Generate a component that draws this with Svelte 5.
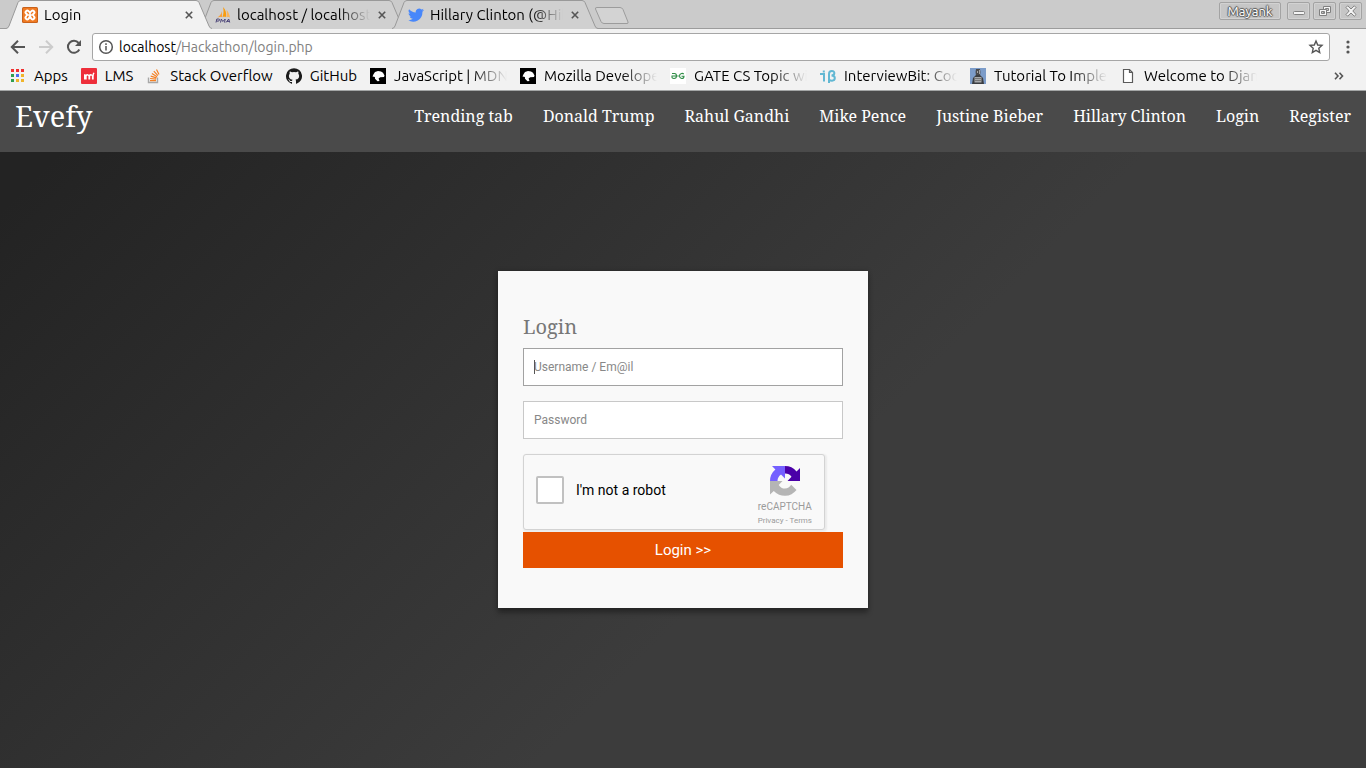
<script>
  const tabs = [
    { icon: 'xampp', label: 'Login', active: true },
    { icon: 'pma', label: 'localhost / localhost' },
    { icon: 'twitter', label: 'Hillary Clinton (@Hil' }
  ];
  const bookmarks = [
    { icon: 'apps', label: 'Apps' },
    { icon: 'lms', label: 'LMS' },
    { icon: 'stack', label: 'Stack Overflow' },
    { icon: 'github', label: 'GitHub' },
    { icon: 'mdn', label: 'JavaScript | MDN', long: true },
    { icon: 'mdn', label: 'Mozilla Develope', long: true },
    { icon: 'gfg', label: 'GATE CS Topic wi', long: true },
    { icon: 'ib', label: 'InterviewBit: Cod', long: true },
    { icon: 'tut', label: 'Tutorial To Imple', long: true },
    { icon: 'page', label: 'Welcome to Djan', long: true }
  ];
  const links = ['Trending tab', 'Donald Trump', 'Rahul Gandhi', 'Mike Pence', 'Justine Bieber', 'Hillary Clinton', 'Login', 'Register'];
  const dots = ['#f03030', '#f03030', '#f03030', '#2f9e4f', '#4a6cf0', '#f0b429', '#2f9e4f', '#f0b429', '#f0b429'];

  let username = $state('');
  let password = $state('');
  let human = $state(false);
</script>

{#snippet icon(name)}
  <svg class="icon" viewBox="0 0 16 16" aria-hidden="true">
    {#if name === 'xampp'}
      <rect width="16" height="16" rx="1.5" fill="#c9611a" />
      <rect x="1" y="1" width="14" height="14" rx="1" fill="#f07a22" />
      <path d="M5.300 5.300l5.400 5.400M10.700 5.300l-5.400 5.400" stroke="#fff" stroke-width="5.400" stroke-linecap="round" />
      <path d="M5.300 5.400Q8 6.500 5.300 10.600M10.700 5.400Q8 6.500 10.700 10.600" fill="none" stroke="#f07a22" stroke-width="1.500" stroke-linecap="round" />
      <path d="M4 8h8" stroke="#fff" stroke-width="1.500" />
    {:else if name === 'pma'}
      <path d="M7 1.500C7.500 5 6 8 2.500 10.500c2-.5 3-.6 4.500-.5z" fill="#f9a13a" />
      <path d="M8 0c3 3 3.500 6.500 3 10-1-.4-2-.4-3.500 0C8.500 7 9 4 8 0z" fill="#f89c0e" />
      <path d="M11.500 3c2 2 3 4.500 3.500 7.500-1-.5-2-.6-3.500-.5.400-2.500.5-4.500 0-7z" fill="#fbb55a" />
      <path d="M1 15.500l.8-3.500h1.700q1.300 0 1 1.100t-1.500 1H1.700M5.500 15.500l.8-3.500 1.500 2.500L10.200 12l-.7 3.500M11 15.500l2.700-3.500 1 3.500M12 14.400h2.400" fill="none" stroke="#4b4478" stroke-width="1" />
    {:else if name === 'twitter'}
      <path d="M16 3.100c-.6.3-1.200.4-1.900.5.700-.4 1.200-1 1.400-1.800-.6.400-1.300.6-2.100.8a3.280 3.280 0 0 0-5.600 3C5.100 5.500 2.700 4.100 1.100 2.200a3.300 3.300 0 0 0 1 4.400c-.5 0-1-.2-1.500-.4 0 1.600 1.100 2.900 2.600 3.200-.5.100-1 .2-1.500.1.400 1.300 1.600 2.200 3.100 2.300A6.600 6.600 0 0 1 0 13.100a9.300 9.300 0 0 0 14.400-8.300c.6-.5 1.200-1 1.600-1.700z" fill="#4887fa" />
    {:else if name === 'apps'}
      {#each dots as color, i}
        <rect x={1 + (i % 3) * 5} y={1 + Math.floor(i / 3) * 5} width="3" height="3" fill={color} />
      {/each}
    {:else if name === 'lms'}
      <rect width="16" height="16" rx="1" fill="#ee2e3a" />
      <path d="M3 11.500V6.200h1.700v.7Q6 5.400 7.900 6.800 10 5.300 11.300 6.900q.3-1.300 1-2.400l1.300.6q-.9 1.300-.9 3.400v3h-1.800V8.200q-.7-1.200-1.700 0v3.300H7.400V8.200q-.8-1.200-1.700 0v3.300z" fill="#fff" />
    {:else if name === 'stack'}
      <path d="M2.500 9.500v5h9v-5" fill="none" stroke="#a8a8a8" stroke-width="1.400" />
      <path d="M4 12.600h6M4.100 10.500l6 .6M4.700 8.200l5.800 1.600M5.900 5.600l5.200 3.100M7.800 3.200l4.100 4.400M10.500 1.500l2.500 5" fill="none" stroke="#f48024" stroke-width="1.200" />
    {:else if name === 'github'}
      <path d="M8 .2a8 8 0 0 0-2.530 15.590c.4.070.550-.170.550-.380v-1.490c-2.230.480-2.690-.950-2.690-.950-.360-.920-.890-1.170-.890-1.170-.730-.5.050-.490.050-.490.8.060 1.230.830 1.230.830.720 1.220 1.870.870 2.330.660.070-.520.280-.870.510-1.070-1.780-.2-3.640-.890-3.640-3.950 0-.870.310-1.590.820-2.150-.080-.2-.360-1.020.080-2.120 0 0 .670-.220 2.200.820a7.700 7.700 0 0 1 4 0c1.530-1.040 2.200-.820 2.200-.820.440 1.100.160 1.920.080 2.120.510.560.820 1.270.820 2.150 0 3.070-1.870 3.750-3.650 3.950.290.250.540.730.540 1.480v2.200c0 .210.150.460.550.380A8 8 0 0 0 8 .2z" fill="#1b1b1b" />
    {:else if name === 'mdn'}
      <rect width="16" height="16" fill="#000" />
      <path d="M2.500 8.500l1-2.300L5 4l3-1 3 .4 2 1.400 1.500 2.700L14 9l-3.800.2-1.600 1.200.9 2.600-2 .2L5 10.800 4.900 9z" fill="#fff" />
    {:else if name === 'gfg'}
      <rect width="16" height="16" fill="#fff" />
      <path d="M2 5.500h2.500q2 0 2 2.500t-2.500 2.500Q1.500 10.500 2 8h4.500M13.800 6q-1-.8-2.300-.5Q9.500 6 9.500 8t2.200 2.500q2.300 0 2.300-2.300h-2.500M7.200 8h1.600" fill="none" stroke="#2f8d46" stroke-width="1.100" />
    {:else if name === 'ib'}
      <path d="M0 6h4v7.500M2.800 3.500h2M9 15V6q0-3 2.800-3t2.500 2.500Q14 7.500 11.500 7.500q3.300 0 3.300 2.500T12 12.700q-1.700 0-2.800-.8" fill="none" stroke="#62b8d3" stroke-width="2" />
    {:else if name === 'tut'}
      <rect width="16" height="16" fill="#7c9cc9" />
      <path d="M6 1h4q1 3 0 7H6Q5 4 6 1z" fill="#4a4a4c" /><path d="M7 3h1v2H7zM9 2h1v4H9z" fill="#a5a5a5" />
      <path d="M2 16l1-6 3-3h4l3 3 1 6z" fill="#3b3d40" /><path d="M4.500 9h7v5.500h-7z" fill="#a6a8aa" />
      <path d="M5 10.500h6M5 12.500h6" stroke="#777" />
    {:else if name === 'page'}
      <path d="M3.500 1.500h6l3 3v10h-9zM9.500 1.500v3h3" fill="#fff" stroke="#5a5a5a" stroke-width="1.200" />
    {/if}
  </svg>
{/snippet}

<div class="window">
  <header class="chrome">
    <div class="strip">
      <div class="tabs">
        {#each tabs as tab}
          <div class="tab" class:active={tab.active}>
            <svg class="shape" viewBox="0 0 206 29" preserveAspectRatio="none" aria-hidden="true">
              <path d="M0 28.500Q2 28.500 3 26L12 2.500Q13 .5 15 .5H190Q192 .5 193 2.500L203 26Q204 28.500 206 28.500V29H0z" class="fill" />
              <path d="M0 28.500Q2 28.500 3 26L12 2.500Q13 .5 15 .5H190Q192 .5 193 2.500L203 26Q204 28.500 206 28.500" class="edge" />
            </svg>
            {@render icon(tab.icon)}
            <span class="title">{tab.label}</span>
            <button class="close" aria-label="Close tab">
              <svg viewBox="0 0 10 10"><path d="M1 1l8 8M9 1l-8 8" /></svg>
            </button>
          </div>
        {/each}
        <button class="new" aria-label="New tab">
          <svg viewBox="0 0 36 18"><path d="M3 .5H26q2 0 3 2L34 15q.5 1.500-1 1.500H10q-2 0-3-2L1.500 2Q1 .5 3 .5z" fill="#d3d3d3" stroke="#9c9c9c" /></svg>
        </button>
      </div>
      <div class="controls">
        <button class="user">Mayank</button>
        <button aria-label="Minimize"><svg viewBox="0 0 16 12"><rect x="2.500" y="6.500" width="11" height="3" rx="1" /></svg></button>
        <button aria-label="Restore"><svg viewBox="0 0 16 12"><path d="M6.500 1.500h7v6h-7zM8.500 3.500v2h3v-2z" fill-rule="evenodd" /><path d="M2.500 4.500h7v6h-7zM4.500 6.500v2h3v-2z" fill-rule="evenodd" /></svg></button>
        <button aria-label="Close"><svg viewBox="0 0 16 12"><path d="M3 2.500 4.700.8 8 4l3.300-3.200L13 2.500 9.800 6 13 9.500l-1.700 1.700L8 8l-3.300 3.200L3 9.500 6.200 6z" /></svg></button>
      </div>
    </div>

    <div class="toolbar">
      <button class="tool" aria-label="Back"><svg viewBox="0 0 16 16"><path d="M15 8H2M8 1.800 1.800 8 8 14.200" /></svg></button>
      <button class="tool dim" aria-label="Forward"><svg viewBox="0 0 16 16"><path d="M1 8h13M8 1.800 14.200 8 8 14.200" /></svg></button>
      <button class="tool" aria-label="Reload"><svg viewBox="0 0 16 16"><path d="M13.300 10.500A6 6 0 1 1 12.600 4" /><path d="M15 1v6H9z" class="solid" /></svg></button>
      <div class="omnibox">
        <svg class="info" viewBox="0 0 16 16" aria-hidden="true"><circle cx="8" cy="8" r="6.300" /><path d="M8 7v4.500M8 4.300v1.600" /></svg>
        <span class="url">localhost<i>/Hackathon/login.php</i></span>
        <button class="tool" aria-label="Bookmark this page"><svg class="star" viewBox="0 0 16 16"><path d="M8 2l1.700 4 4.300.4-3.200 2.900.9 4.200L8 11.300l-3.700 2.200.9-4.200L2 6.400 6.300 6z" /></svg></button>
      </div>
      <button class="tool menu" aria-label="Menu"><svg viewBox="0 0 16 16"><circle cx="8" cy="3" r="1.600" /><circle cx="8" cy="8" r="1.600" /><circle cx="8" cy="13" r="1.600" /></svg></button>
    </div>

    <nav class="bookmarks" aria-label="Bookmarks">
      {#each bookmarks as mark}
        <a href="#top" class:long={mark.long}>{@render icon(mark.icon)}<span>{mark.label}</span></a>
      {/each}
      <button class="more" aria-label="More bookmarks"><svg viewBox="0 0 10 8"><path d="M1 .8 4 4 1 7.200M5.500.8l3 3.200-3 3.200" /></svg></button>
    </nav>
  </header>

  <nav class="site" id="top">
    <a class="brand" href="#top">Evefy</a>
    <div class="links">
      {#each links as link}<a href="#top">{link}</a>{/each}
    </div>
  </nav>

  <main>
    <form class="card" onsubmit={(e) => e.preventDefault()}>
      <h1>Login</h1>
      <div class="field">
        <input class="text current" type="text" aria-label="Username or email" placeholder="Username / Em@il" bind:value={username} />
        {#if !username}<span class="caret"></span>{/if}
      </div>
      <input class="text" type="password" aria-label="Password" placeholder="Password" bind:value={password} />
      <div class="captcha">
        <label><input type="checkbox" bind:checked={human} />I'm not a robot</label>
        <div class="badge">
          <svg viewBox="0 0 32 32" aria-hidden="true">
            <path d="M16 1a15 15 0 0 1 11.500 5.400L31 3v13H18.500l4-4.200A7.600 7.600 0 0 0 16 8.500z" fill="#4a00a8" />
            <path d="M16 1v12.500l-4-4Q8.500 12 8.500 16H1A15 15 0 0 1 6.400 4.500L3 1z" fill="#7460ff" />
            <path d="M1 16h12.500l-3.800 3.900Q12 23.500 16 23.500q4 0 6.200-3.700l5.300 5.300A15 15 0 0 1 4.800 26L1 29.500z" fill="#b5b5b5" />
          </svg>
          <span class="name">reCAPTCHA</span>
          <span class="legal"><a href="#top">Privacy</a> - <a href="#top">Terms</a></span>
        </div>
      </div>
      <button class="submit">Login &gt;&gt;</button>
    </form>
  </main>
</div>

<style>
  :global(body) { margin: 0; }
  * { box-sizing: border-box; }
  button { margin: 0; padding: 0; border: 0; background: none; font: inherit; color: inherit; }
  a { color: inherit; text-decoration: none; }
  svg { display: block; }
  .window { min-height: 100vh; display: flex; flex-direction: column; }

  .chrome { background: #f2f2f2; border-bottom: 1px solid #a4a6a6; font: 15px/20px Ubuntu, "Noto Sans", sans-serif; color: #000; }
  .strip { display: flex; justify-content: space-between; height: 29px; background: #cbcbcb; box-shadow: inset 0 -1px #9c9c9c; }
  .tabs { display: flex; padding-left: 6px; }
  .tab { position: relative; z-index: 1; display: flex; align-items: center; width: 206px; height: 29px; margin-right: -13px; padding: 0 15px 0 16px; }
  .tab.active { z-index: 2; }
  .shape { position: absolute; inset: 0; width: 100%; height: 100%; }
  .fill { fill: #d0d0d0; }
  .active .fill { fill: #f2f2f2; }
  .edge { fill: none; stroke: #999; }
  .icon { position: relative; flex: none; width: 16px; height: 16px; }
  .title { position: relative; flex: 1; min-width: 0; margin: 0 4px 0 6px; overflow: hidden; white-space: nowrap; mask-image: linear-gradient(90deg, #000 calc(100% - 32px), transparent); }
  .close { position: relative; width: 16px; height: 16px; padding: 4px; }
  .close svg { width: 8px; height: 8px; fill: none; stroke: #555; stroke-width: 2; }
  .new { margin: 7px 0 0 9px; height: 18px; }
  .new svg { width: 36px; height: 18px; }

  .controls { display: flex; gap: 3px; padding: 2px 4px 0 0; }
  .controls button { width: 23px; height: 18px; border: 1px solid #a3a3a3; border-radius: 2px; background: #c6c6c6; box-shadow: inset 0 0 0 1px #d2d2d2; }
  .controls svg { width: 16px; height: 12px; margin: 0 auto; fill: #f4f4f4; stroke: #808080; }
  .controls .user { width: 62px; margin-right: 3px; font-size: 13px; line-height: 16px; color: #fff; text-shadow: 1px 0 1px #555, -1px 0 1px #555, 0 1px 1px #555, 0 -1px 1px #555; }

  .toolbar { display: flex; align-items: center; height: 36px; padding: 0 10px; gap: 12px; }
  .tool svg { width: 16px; height: 16px; fill: none; stroke: #555; stroke-width: 2; }
  .dim svg { stroke: #ccc; }
  .tool .solid { fill: #555; stroke: none; }
  .toolbar .menu { margin-left: -2px; }
  .menu svg { fill: #555; stroke: none; }
  .omnibox { flex: 1; display: flex; align-items: center; gap: 5px; height: 28px; padding: 0 5px; margin-left: -2px; background: #fff; border: 1px solid #a6a6a6; border-radius: 3px; }
  .toolbar .star { stroke-width: 1.400; }
  .info { width: 16px; height: 16px; fill: none; stroke: #555; stroke-width: 1.500; }
  .url { flex: 1; font-size: 14px; }
  .url i { font-style: normal; color: #808080; }

  .bookmarks { display: flex; align-items: center; gap: 13px; height: 21px; padding: 0 21px 0 10px; margin-bottom: 4px; }
  .bookmarks a { display: flex; align-items: center; gap: 8px; white-space: nowrap; }
  .bookmarks .long { width: 137px; min-width: 0; }
  .long span { flex: 1; overflow: hidden; mask-image: linear-gradient(90deg, #000 calc(100% - 36px), transparent); }
  .more { margin-left: auto; }
  .more svg { width: 12px; height: 8px; fill: none; stroke: #555; stroke-width: 1.600; }

  .site { display: flex; justify-content: space-between; height: 61px; padding: 0 15px; background: #4a4a4a; color: #fff; font: 16px/20px "Droid Serif", "Noto Serif", "DejaVu Serif", serif; }
  .brand { padding-top: 9px; font-size: 29px; line-height: 32px; }
  .links { display: flex; gap: 30px; padding-top: 15px; white-space: nowrap; }

  main { flex: 1; display: flex; justify-content: center; align-items: flex-start; padding: 119px 20px 60px; background: linear-gradient(135deg, #232323 3%, #3c3c3c 58%); font-family: Roboto, sans-serif; }
  .card { width: 370px; padding: 40px 25px; background: #f9f9f9; box-shadow: 0 5px 5px rgba(0, 0, 0, 0.3), 0 0 5px rgba(0, 0, 0, 0.2); }
  h1 { margin: 0 0 5px; font: 20px/32px "Droid Serif", "Noto Serif", "DejaVu Serif", serif; color: #777; }
  .field { position: relative; }
  .text { display: block; width: 100%; height: 38px; margin: 0 0 15px; padding: 0 10px; border: 1px solid #c8c8c8; border-radius: 0; background: #fff; font: 12px Roboto, sans-serif; outline: 0; }
  .text.current { border-color: #a2a2a2; }
  .text::placeholder { color: #888; opacity: 1; }
  .caret { position: absolute; left: 11px; top: 12px; width: 1px; height: 14px; background: #555; }
  .captcha { display: flex; justify-content: space-between; width: 302px; height: 76px; margin-bottom: 2px; padding: 0 12px; background: #f9f9f9; border: 1px solid #d3d3d3; border-radius: 3px; box-shadow: 1px 1px 2px 1px rgba(0, 0, 0, 0.06); }
  label { display: flex; align-items: center; gap: 12px; height: 70px; font-size: 14px; color: #000; }
  label input { appearance: none; width: 28px; height: 28px; margin: 0; border: 2px solid #c1c1c1; border-radius: 2px; background: #fff; }
  label input:checked { background: #4a90e2; }
  .badge { display: flex; flex-direction: column; align-items: center; padding-top: 10px; color: #9b9b9b; white-space: nowrap; }
  .badge svg { width: 32px; height: 32px; }
  .name { margin-top: 3px; font-size: 10px; line-height: 14px; }
  .legal { font-size: 8px; line-height: 14px; }
  .submit { width: 100%; height: 36px; background: #e65100; color: #fff; font-size: 15px; }
</style>
